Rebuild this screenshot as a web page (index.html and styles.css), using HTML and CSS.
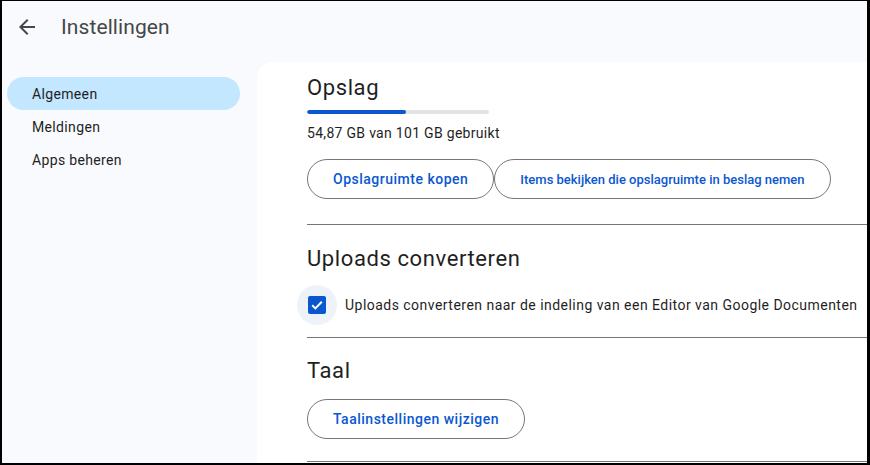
FILE: index.html
```html
<!DOCTYPE html>
<html lang="nl">
<head>
    <meta charset="UTF-8">
    <title>Instellingen</title>
    <link rel="stylesheet" href="styles.css">
</head>
<body>
    <div class="venster">
        <header class="kop">
            <svg class="terug" viewBox="0 0 24 24" width="24" height="24">
                <path d="M20 11H7.83l5.59-5.59L12 4l-8 8 8 8 1.41-1.41L7.83 13H20v-2z"/>
            </svg>
            <h1>Instellingen</h1>
        </header>

        <div class="hoofd">
            <nav class="zijbalk">
                <a class="item actief" href="#">Algemeen</a>
                <a class="item" href="#">Meldingen</a>
                <a class="item" href="#">Apps beheren</a>
            </nav>

            <main class="kaart">
                <section class="sectie opslag">
                    <h2>Opslag</h2>
                    <div class="balk"><div class="balk-vol" style="width: 54.3%"></div></div>
                    <p class="gebruik">54,87 GB van 101 GB gebruikt</p>
                    <div class="knoppen">
                        <button class="knop">Opslagruimte kopen</button>
                        <button class="knop klein">Items bekijken die opslagruimte in beslag nemen</button>
                    </div>
                </section>

                <section class="sectie uploads">
                    <h2>Uploads converteren</h2>
                    <label class="vinkje">
                        <span class="halo">
                            <span class="vak">
                                <svg viewBox="0 0 18 18" width="18" height="18">
                                    <path d="M4.2 9.3l3.2 3.1 6.4-6.6" fill="none" stroke="#fff" stroke-width="2"/>
                                </svg>
                            </span>
                        </span>
                        Uploads converteren naar de indeling van een Editor van Google Documenten
                    </label>
                </section>

                <section class="sectie taal">
                    <h2>Taal</h2>
                    <button class="knop">Taalinstellingen wijzigen</button>
                </section>
            </main>
        </div>
    </div>
</body>
</html>
```

FILE: styles.css
```css
* {
    margin: 0;
    padding: 0;
    box-sizing: border-box;
}

body {
    font-family: 'Roboto', 'Liberation Sans', sans-serif;
    background-color: #000;
    color: #1f1f1f;
}

.venster {
    width: 870px;
    height: 465px;
    border-style: solid;
    border-color: #000;
    border-width: 1px 3px 2px 2px;
    background-color: #f8fafd;
    display: flex;
    flex-direction: column;
    overflow: hidden;
}

.kop {
    height: 52px;
    display: flex;
    align-items: center;
    padding-left: 13px;
    flex-shrink: 0;
}

.terug {
    fill: #444746;
    margin-right: 22px;
}

.kop h1 {
    font-size: 21px;
    font-weight: 400;
    letter-spacing: 0.1px;
    color: #444746;
}

.hoofd {
    flex: 1;
    display: flex;
    min-height: 0;
}

.zijbalk {
    width: 255px;
    flex-shrink: 0;
    padding: 24px 0 0 5px;
}

.item {
    display: flex;
    align-items: center;
    width: 233px;
    height: 33px;
    padding-left: 25px;
    border-radius: 17px;
    font-size: 14px;
    letter-spacing: 0.35px;
    color: #1f1f1f;
    text-decoration: none;
}

.item.actief {
    background-color: #c2e7ff;
}

.kaart {
    flex: 1;
    margin-top: 9px;
    background-color: #fff;
    border-top-left-radius: 16px;
    padding-left: 50px;
}

.sectie {
    border-bottom: 1px solid #747775;
}

.sectie h2 {
    font-size: 22px;
    font-weight: 400;
    line-height: 28px;
    letter-spacing: 0.6px;
    color: #1f1f1f;
}

.opslag {
    padding: 12px 0 25px;
}

.balk {
    width: 182px;
    height: 4px;
    margin-top: 8px;
    border-radius: 2px;
    background-color: #e3e3e3;
    overflow: hidden;
}

.balk-vol {
    height: 100%;
    background-color: #0b57d0;
    border-radius: 2px;
}

.gebruik {
    margin-top: 9px;
    font-size: 14px;
    line-height: 20px;
    letter-spacing: 0.3px;
}

.knoppen {
    display: flex;
    margin-top: 16px;
}

.knop {
    height: 40px;
    padding: 0 25px;
    border: 1px solid #747775;
    border-radius: 20px;
    background: #fff;
    color: #0b57d0;
    font-family: inherit;
    font-size: 14px;
    font-weight: 500;
    letter-spacing: 0.5px;
}

.knop.klein {
    font-size: 13px;
    letter-spacing: 0;
    padding: 0 25px;
}

.uploads {
    padding: 20px 0 12px;
}

.vinkje {
    display: flex;
    align-items: center;
    margin-top: 12px;
    margin-left: -10px;
    font-size: 14px;
    letter-spacing: 0.47px;
}

.halo {
    width: 40px;
    height: 40px;
    border-radius: 50%;
    background-color: #eef2f9;
    display: flex;
    align-items: center;
    justify-content: center;
    margin-right: 8px;
}

.vak {
    width: 18px;
    height: 18px;
    border-radius: 2px;
    background-color: #0b57d0;
    display: flex;
}

.taal {
    padding: 19px 0 22px;
}

.taal .knop {
    margin-top: 14px;
}
```
